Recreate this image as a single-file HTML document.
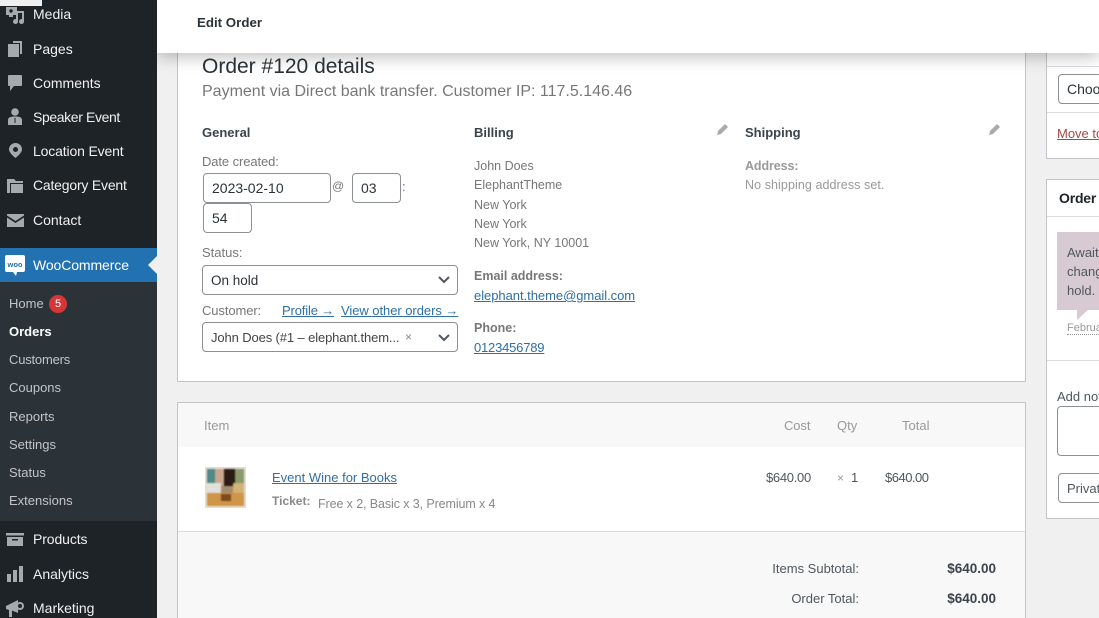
<!DOCTYPE html>
<html><head><meta charset="utf-8"><title>Edit Order</title>
<style>
html,body{margin:0;padding:0;width:1099px;height:618px;overflow:hidden;background:#f0f0f1}
body{position:relative;font-family:"Liberation Sans",Arial,sans-serif;font-size:13px;color:#50575e}
div,a,svg{position:absolute}
.t{white-space:nowrap;line-height:20px;height:20px}
a{color:#2f6fa3;text-decoration:underline}
.s{left:33px;color:#f0f0f1;font-size:14px;z-index:5}
.m{left:9px;color:#c3c4c7;font-size:13px;z-index:5}
.b{background:#fff;border:1px solid #c3c4c7;box-sizing:border-box}
.i{background:#fff;border:1px solid #8c8f94;border-radius:4px;box-sizing:border-box}
.g{color:#777}
.h{font-weight:bold;color:#3c434a;font-size:13px}
.l{font-weight:bold;color:#777}
</style></head><body>
<!-- side panels -->
<div class="b" style="left:1046px;top:40px;width:70px;height:119px"></div>
<div style="left:1047px;top:66px;width:60px;height:1px;background:#dcdcde"></div>
<div style="left:1047px;top:112px;width:60px;height:1px;background:#dcdcde"></div>
<div class="i" style="left:1058px;top:74px;width:70px;height:30px"></div>
<div class="t" style="left:1067px;top:79px;font-size:14px;color:#2c3338">Choose</div>
<a class="t" style="left:1057px;top:124px;color:#a4494a">Move to</a>

<div class="b" style="left:1046px;top:179px;width:70px;height:340px"></div>
<div style="left:1047px;top:216px;width:60px;height:1px;background:#dcdcde"></div>
<div class="t" style="left:1059px;top:188px;font-size:14px;font-weight:bold;color:#1d2327;letter-spacing:-.2px">Order notes</div>
<div style="left:1057px;top:232px;width:50px;height:78px;background:#d7cad2"></div>
<svg style="left:1077px;top:310px" width="11" height="10"><path d="M0 0h11L0 10z" fill="#d7cad2"/></svg>
<div class="t" style="left:1067px;top:243px;color:#50575e">Awaiting</div>
<div class="t" style="left:1067px;top:262px;color:#50575e">changed</div>
<div class="t" style="left:1067px;top:281px;color:#50575e">hold.</div>
<div class="t" style="left:1067px;top:318px;font-size:11px;color:#999;width:40px;overflow:hidden">February</div>
<div style="left:1067px;top:334px;width:32px;border-top:1px dotted #999"></div>
<div style="left:1047px;top:360px;width:60px;height:1px;background:#dcdcde"></div>
<div class="t" style="left:1057px;top:387px;color:#50575e">Add note</div>
<div class="i" style="left:1057px;top:406px;width:70px;height:50px"></div>
<div class="i" style="left:1058px;top:473px;width:70px;height:30px"></div>
<div class="t" style="left:1067px;top:479px;color:#50575e;font-size:13px">Private</div>

<!-- main panel -->
<div class="b" style="left:177px;top:20px;width:849px;height:362px"></div>
<div class="t" style="left:202px;top:57px;font-size:21px;color:#2c3338">Order #120 details</div>
<div class="t" style="left:202px;top:82px;font-size:16px;color:#777">Payment via Direct bank transfer. Customer IP: 117.5.146.46</div>

<div class="t h" style="left:202px;top:123px">General</div>
<div class="t g" style="left:202px;top:152px;letter-spacing:-.1px">Date created:</div>
<div class="i" style="left:203px;top:173px;width:128px;height:30px"></div>
<div class="t" style="left:212px;top:178px;color:#2c3338;font-size:14px">2023-02-10</div>
<div class="t g" style="left:332px;top:176px;font-size:12px">@</div>
<div class="i" style="left:352px;top:173px;width:49px;height:30px"></div>
<div class="t" style="left:361px;top:178px;color:#2c3338;font-size:14px">03</div>
<div class="t g" style="left:402px;top:177px">:</div>
<div class="i" style="left:203px;top:203px;width:49px;height:30px"></div>
<div class="t" style="left:212px;top:208px;color:#2c3338;font-size:14px">54</div>
<div class="t g" style="left:202px;top:243px">Status:</div>
<div class="i" style="left:202px;top:265px;width:256px;height:30px"></div>
<div class="t" style="left:211px;top:271px;color:#2c3338;font-size:13.5px">On hold</div>
<svg style="left:437px;top:275px" width="14" height="10"><path d="M2 2l5 5 5-5" fill="none" stroke="#50575e" stroke-width="2"/></svg>
<div class="t g" style="left:202px;top:301px;letter-spacing:-.1px">Customer:</div>
<a class="t" style="left:282px;top:301px;letter-spacing:-.15px">Profile →</a>
<a class="t" style="left:341px;top:301px;letter-spacing:-.05px">View other orders →</a>
<div class="i" style="left:202px;top:322px;width:256px;height:30px"></div>
<div class="t" style="left:211px;top:328px;color:#444;letter-spacing:-.12px">John Does (#1 – elephant.them...</div>
<div class="t" style="left:405px;top:327px;color:#888;font-size:12px">×</div>
<svg style="left:437px;top:333px" width="14" height="10"><path d="M2 2l5 5 5-5" fill="none" stroke="#50575e" stroke-width="2"/></svg>

<div class="t h" style="left:474px;top:123px">Billing</div>
<svg style="left:717px;top:124px" width="11" height="11" viewBox="0 0 11 11"><path d="M8 0l3 3-7 7-4 1 1-4z" fill="#aaa"/></svg>
<div class="t g" style="left:474px;top:156px;font-size:12.5px">John Does</div>
<div class="t g" style="left:474px;top:175px;font-size:12.5px">ElephantTheme</div>
<div class="t g" style="left:474px;top:195px;font-size:12.5px">New York</div>
<div class="t g" style="left:474px;top:214px;font-size:12.5px">New York</div>
<div class="t g" style="left:474px;top:233px;font-size:12.5px">New York, NY 10001</div>
<div class="t l" style="left:474px;top:266px;font-size:12.5px">Email address:</div>
<a class="t" style="left:474px;top:286px;letter-spacing:-.04px">elephant.theme@gmail.com</a>
<div class="t l" style="left:474px;top:318px;font-size:12.5px">Phone:</div>
<a class="t" style="left:474px;top:338px;letter-spacing:-.2px">0123456789</a>

<div class="t h" style="left:745px;top:123px">Shipping</div>
<svg style="left:989px;top:124px" width="11" height="11" viewBox="0 0 11 11"><path d="M8 0l3 3-7 7-4 1 1-4z" fill="#aaa"/></svg>
<div class="t l" style="left:745px;top:156px;font-size:12.5px;color:#999;letter-spacing:-.1px">Address:</div>
<div class="t" style="left:745px;top:175px;font-size:12.5px;color:#999;letter-spacing:.08px">No shipping address set.</div>

<!-- items panel -->
<div class="b" style="left:177px;top:402px;width:849px;height:240px"></div>
<div style="left:178px;top:403px;width:847px;height:44px;background:#f8f8f8"></div>
<div style="left:178px;top:531px;width:847px;height:100px;background:#f8f8f8;border-top:1px solid #dcdcde"></div>
<div class="t" style="left:204px;top:416px;color:#999">Item</div>
<div class="t" style="left:784px;top:416px;color:#999;letter-spacing:-.1px">Cost</div>
<div class="t" style="left:837px;top:416px;color:#999">Qty</div>
<div class="t" style="left:902px;top:416px;color:#999">Total</div>
<div style="left:205px;top:467px;width:41px;height:41px;background:#e8ddd0;overflow:hidden">
<svg style="left:0;top:0;filter:blur(.8px)" width="41" height="41" viewBox="0 0 41 41">
<rect x="2" y="2" width="37" height="37" fill="#b9a284"/>
<rect x="2" y="2" width="8" height="14" fill="#4f8a86"/>
<rect x="10" y="2" width="9" height="17" fill="#c9a88f"/>
<rect x="19" y="2" width="11" height="17" fill="#2a1c14"/>
<rect x="30" y="2" width="9" height="14" fill="#8a9a6a"/>
<rect x="2" y="16" width="14" height="10" fill="#e2e0da"/>
<rect x="16" y="19" width="12" height="7" fill="#a58c6b"/>
<rect x="28" y="16" width="11" height="10" fill="#d2b276"/>
<rect x="2" y="26" width="37" height="13" fill="#cf9548"/>
<rect x="16" y="27" width="10" height="7" fill="#7f4a1e"/>
</svg></div>
<a class="t" style="left:272px;top:468px">Event Wine for Books</a>
<div class="t" style="left:272px;top:491px;color:#888;font-weight:bold;font-size:12px">Ticket:</div>
<div class="t" style="left:318px;top:494px;color:#888;font-size:12.5px;letter-spacing:-.1px">Free x 2, Basic x 3, Premium x 4</div>
<div class="t" style="left:766px;top:468px;color:#50575e;letter-spacing:-.3px">$640.00</div>
<div class="t" style="left:837px;top:468px;color:#999;font-size:12px">×</div>
<div class="t" style="left:851px;top:468px;color:#50575e">1</div>
<div class="t" style="left:885px;top:468px;color:#50575e;letter-spacing:-.5px">$640.00</div>
<div class="t" style="left:659px;width:200px;top:559px;text-align:right;color:#50575e">Items Subtotal:</div>
<div class="t" style="left:659px;width:200px;top:589px;text-align:right;color:#50575e">Order Total:</div>
<div class="t" style="left:796px;width:200px;top:559px;text-align:right;color:#3c434a;font-weight:bold;font-size:13.5px">$640.00</div>
<div class="t" style="left:796px;width:200px;top:589px;text-align:right;color:#3c434a;font-weight:bold;font-size:13.5px">$640.00</div>

<!-- header -->
<div style="left:157px;top:0;width:942px;height:53px;background:#fff;box-shadow:0 3px 16px rgba(0,0,0,.28)"></div>
<div class="t" style="left:197px;top:13px;font-size:13.3px;font-weight:bold;color:#2c3338">Edit Order</div>

<!-- sidebar -->
<div style="left:0;top:0;width:157px;height:618px;background:#1d2327;z-index:4"></div>
<div style="left:0;top:0;width:42px;height:6px;background:#f0f0f1;z-index:5"></div>
<div style="left:0;top:248px;width:157px;height:34px;background:#2271b1;z-index:4"></div>
<div style="left:0;top:282px;width:157px;height:239px;background:#2c3338;z-index:4"></div>
<svg style="left:0;top:0;z-index:5" width="157" height="618" viewBox="0 0 157 618">
<path d="M157 256l-9 9 9 9z" fill="#f0f0f1"/>
<g fill="#a7aaad">
<path fill-rule="evenodd" d="M6 7h11v8H13v2H9v-2H6zM11 9.300a1.700 1.700 0 1 0 0 3.400 1.700 1.700 0 0 0 0-3.400z"/>
<path d="M16 11h8v10.500a2.500 2.500 0 1 1-2-2.400V13h-4v8.500a2.500 2.500 0 1 1-2-2.400z"/>
<path d="M13 41h9v13h-2V43h-7z"/>
<path d="M8 44h11v13H8z"/>
<path d="M9 75h12a1 1 0 0 1 1 1v9a1 1 0 0 1-1 1h-7l-4 5v-5H9a1 1 0 0 1-1-1v-9a1 1 0 0 1 1-1z"/>
<circle cx="15" cy="112" r="3.800"/>
<path d="M8 125v-5c0-3 3-3.500 7-3.500s7 .5 7 3.500v5z"/>
<path fill-rule="evenodd" d="M15.500 143a6.500 6.500 0 0 1 6.500 6.500c0 3.500-6.500 8.500-6.500 8.500S9 153 9 149.500a6.500 6.500 0 0 1 6.500-6.500zm0 4a2.500 2.500 0 1 0 0 5 2.500 2.500 0 0 0 0-5z"/>
<path d="M7 179h7l2 2h7v2H10v10H7z"/>
<path d="M11 184h12v9H11z"/>
<path d="M7 214h17v1.500l-8.500 5.500L7 215.500z"/>
<path d="M7 217.500l8.500 5.500 8.500-5.500V227H7z"/>
<path d="M6 533h18v2.500H6z"/>
<path d="M7 537h16v9H7z"/>
<path d="M7 574h4v8H7zM13 570h4v12h-4zM19 566h4v16h-4z"/>
<path d="M6 606l12-6v13l-6-2.500V617H9v-7l-3-1z"/>
<circle cx="20" cy="606" r="4"/>
</g>
<path d="M12 539h6v1.500h-6z" fill="#1d2327"/>
<path d="M14.500 118h1v5h-1z" fill="#1d2327"/>
<circle cx="20" cy="606" r="2" fill="#1d2327"/>
<path d="M7 255h16a2 2 0 0 1 2 2v13a2 2 0 0 1-2 2h-6l-1 4-3-4H7a2 2 0 0 1-2-2v-13a2 2 0 0 1 2-2z" fill="#fff"/>
<text x="15" y="267" font-size="7.500" font-weight="bold" text-anchor="middle" fill="#2271b1" font-family="Liberation Sans">woo</text>
</svg>

<div class="t s" style="top:4px">Media</div>
<div class="t s" style="top:39px">Pages</div>
<div class="t s" style="top:73px">Comments</div>
<div class="t s" style="top:107px;letter-spacing:-.38px">Speaker Event</div>
<div class="t s" style="top:141px;letter-spacing:-.15px">Location Event</div>
<div class="t s" style="top:175px;letter-spacing:-.2px">Category Event</div>
<div class="t s" style="top:210px">Contact</div>
<div class="t s" style="top:255px;color:#fff;letter-spacing:-.1px">WooCommerce</div>
<div class="t m" style="top:294px">Home</div>
<div style="left:49px;top:295px;width:18px;height:18px;border-radius:9px;background:#d63638;color:#fff;font-size:11px;line-height:18px;text-align:center;z-index:5">5</div>
<div class="t m" style="top:322px;color:#fff;font-weight:bold">Orders</div>
<div class="t m" style="top:350px;letter-spacing:-.2px">Customers</div>
<div class="t m" style="top:378px">Coupons</div>
<div class="t m" style="top:407px">Reports</div>
<div class="t m" style="top:435px">Settings</div>
<div class="t m" style="top:463px">Status</div>
<div class="t m" style="top:491px">Extensions</div>
<div class="t s" style="top:529px;letter-spacing:-.1px">Products</div>
<div class="t s" style="top:564px">Analytics</div>
<div class="t s" style="top:598px">Marketing</div>
</body></html>
